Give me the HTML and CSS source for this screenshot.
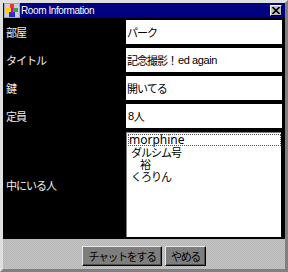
FILE: index.html
```html
<!DOCTYPE html>
<html lang="ja">
<head>
    <meta charset="UTF-8">
    <title>Room Information</title>
    <link rel="stylesheet" href="styles.css">
</head>
<body>
<div class="window">
    <div class="titlebar">
        <svg class="app-icon" width="16" height="15" viewBox="0 0 16 15">
            <rect x="0" y="0" width="16" height="15" fill="#9ab"/>
            <rect x="1" y="1" width="14" height="13" fill="#ccd"/>
            <rect x="6" y="1" width="4" height="4" fill="#e33"/>
            <rect x="2" y="5" width="5" height="5" fill="#fc0"/>
            <rect x="9" y="5" width="5" height="4" fill="#3a3"/>
            <rect x="5" y="9" width="6" height="5" fill="#23c"/>
            <rect x="7" y="5" width="2" height="5" fill="#c0c"/>
        </svg>
        <span class="title">Room Information</span>
        <button class="close" type="button">
            <svg width="8" height="7" viewBox="0 0 8 7">
                <path d="M0.5 0 L7.5 7 M7.5 0 L0.5 7" stroke="#000" stroke-width="1.6"/>
            </svg>
        </button>
    </div>

    <div class="form">
        <div class="label">部屋</div>
        <div class="field">パーク</div>

        <div class="label">タイトル</div>
        <div class="field">記念撮影！<span class="latin">ed again</span></div>

        <div class="label">鍵</div>
        <div class="field">開いてる</div>

        <div class="label">定員</div>
        <div class="field"><span class="latin">8</span>人</div>

        <div class="label">中にいる人</div>
        <ul class="members">
            <li class="current latin">morphine</li>
            <li class="indent">ダルシム号</li>
            <li class="indent-deep">裕</li>
            <li class="indent">くろりん</li>
        </ul>
    </div>

    <div class="actions">
        <button class="btn btn-chat" type="button">チャットをする</button>
        <button class="btn btn-quit" type="button">やめる</button>
    </div>
</div>
</body>
</html>
```

FILE: styles.css
```css
html, body {
    margin: 0;
    overflow: hidden;
    font-family: "Noto Sans CJK JP", sans-serif;
    font-size: 11px;
}

.window {
    width: 288px;
    height: 272px;
    box-sizing: border-box;
    border: 3px solid #c0c0c0;
    border-top-color: #dfdfdf;
    border-left-color: #dfdfdf;
    border-right-color: #808080;
    border-bottom-color: #808080;
    background: repeating-conic-gradient(#c4c4c4 0 25%, #b6b6b6 0 50%) 0 0 / 2px 2px;
    display: flex;
    flex-direction: column;
}

/* title bar */
.titlebar {
    height: 15px;
    background: #000080;
    display: flex;
    align-items: center;
    gap: 1px;
    padding: 0 3px 0 1px;
}

.app-icon {
    display: block;
    flex: none;
}

.title {
    flex: 1;
    color: #fff;
    font-family: "Liberation Sans", sans-serif;
    font-size: 10px;
    letter-spacing: -0.4px;
    line-height: 15px;
}

.close {
    width: 12px;
    height: 11px;
    padding: 0;
    margin: 0;
    display: flex;
    align-items: center;
    justify-content: center;
    background: #c0c0c0;
    border: 1px solid;
    border-color: #fff #000 #000 #fff;
}

.close svg {
    display: block;
}

/* form */
.form {
    height: 221px;
    box-sizing: border-box;
    background: #000;
    padding: 2px 3px 2px 0;
    display: grid;
    grid-template-columns: 123px 1fr;
    grid-template-rows: 24px 24px 24px 24px 1fr;
    row-gap: 4px;
    letter-spacing: -1px;
}

.label {
    color: #eee;
    padding-left: 3px;
    display: flex;
    align-items: center;
}

.field {
    background: #fff;
    color: #000;
    padding-left: 1px;
    display: flex;
    align-items: center;
    white-space: nowrap;
}

.field .latin {
    font-family: "Liberation Sans", sans-serif;
    letter-spacing: -0.4px;
    padding-left: 1px;
}

.members {
    list-style: none;
    margin: 0 1px 0 0;
    padding: 1px 0 0 1px;
    background: #fff;
    border-top: 1px solid #808080;
    border-left: 1px solid #808080;
}

.members li {
    height: 12px;
    line-height: 12px;
    padding-left: 1px;
    color: #000;
    white-space: nowrap;
}

.members .latin {
    font-family: "Noto Sans", sans-serif;
    font-size: 12px;
    letter-spacing: 0;
}

.members .current {
    outline: 1px dotted #555;
    outline-offset: -1px;
}

.members .indent {
    padding-left: 3px;
}

.members .indent-deep {
    padding-left: 12px;
}

/* buttons */
.actions {
    flex: 1;
    display: flex;
    justify-content: center;
    align-items: flex-start;
    gap: 3px;
    padding-top: 7px;
}

.btn {
    height: 20px;
    margin: 0;
    padding: 0;
    background: #7e7e7e;
    color: #000;
    border: 1px solid;
    border-color: #e8e8e8 #000 #000 #e8e8e8;
    box-shadow: inset -1px -1px 0 #505050;
    font-family: "Noto Sans CJK JP", sans-serif;
    font-size: 11px;
    line-height: 16px;
    letter-spacing: -1.4px;
    white-space: nowrap;
}

.btn-chat {
    width: 80px;
}

.btn-quit {
    width: 41px;
}
```
